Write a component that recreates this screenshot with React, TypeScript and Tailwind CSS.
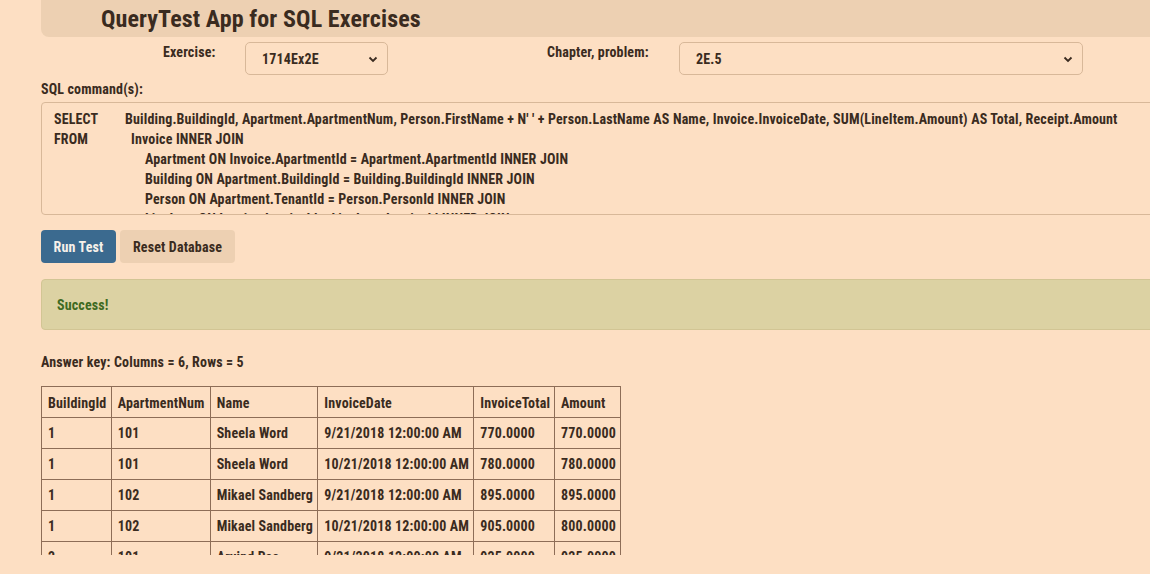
const sqlLines: { kw: string; text: string; indent: string }[] = [
  {
    kw: 'SELECT',
    text: "Building.BuildingId, Apartment.ApartmentNum, Person.FirstName + N' ' + Person.LastName AS Name, Invoice.InvoiceDate, SUM(LineItem.Amount) AS Total, Receipt.Amount",
    indent: 'pl-0',
  },
  { kw: 'FROM', text: 'Invoice INNER JOIN', indent: 'pl-[6px]' },
  { kw: '', text: 'Apartment ON Invoice.ApartmentId = Apartment.ApartmentId INNER JOIN', indent: 'pl-[20px]' },
  { kw: '', text: 'Building ON Apartment.BuildingId = Building.BuildingId INNER JOIN', indent: 'pl-[20px]' },
  { kw: '', text: 'Person ON Apartment.TenantId = Person.PersonId INNER JOIN', indent: 'pl-[20px]' },
  { kw: '', text: 'LineItem ON Invoice.InvoiceId = LineItem.InvoiceId INNER JOIN', indent: 'pl-[20px]' },
  { kw: '', text: 'Receipt ON Invoice.InvoiceId = Receipt.InvoiceId', indent: 'pl-[20px]' },
];

const columns = ['BuildingId', 'ApartmentNum', 'Name', 'InvoiceDate', 'InvoiceTotal', 'Amount'];
const colWidths = ['w-[70px]', 'w-[100px]', 'w-[108px]', 'w-[156px]', 'w-[79px]', 'w-[66px]'];

const rows = [
  ['1', '101', 'Sheela Word', '9/21/2018 12:00:00 AM', '770.0000', '770.0000'],
  ['1', '101', 'Sheela Word', '10/21/2018 12:00:00 AM', '780.0000', '780.0000'],
  ['1', '102', 'Mikael Sandberg', '9/21/2018 12:00:00 AM', '895.0000', '895.0000'],
  ['1', '102', 'Mikael Sandberg', '10/21/2018 12:00:00 AM', '905.0000', '800.0000'],
  ['2', '101', 'Arvind Rao', '9/21/2018 12:00:00 AM', '925.0000', '925.0000'],
];

const Chevron = () => (
  <svg width="10" height="10" viewBox="0 0 10 10" className="text-[#3a2b20]">
    <path d="M1.5 3.5 L5 7 L8.5 3.5" fill="none" stroke="currentColor" strokeWidth="1.8" />
  </svg>
);

export default function App() {
  return (
    <div className="w-full h-[574px] overflow-hidden bg-[#fddfc3] text-[#3a2b20] font-bold font-['Roboto_Condensed','Liberation_Sans',sans-serif] text-[14px] tracking-[0.15px]">
      <div className="w-[1250px] pl-[41px]">
        <header className="h-[37px] bg-[#edd0b2] rounded-bl-[8px] pl-[60px] flex items-center">
          <h1 className="text-[24px] leading-none tracking-[0.1px]">QueryTest App for SQL Exercises</h1>
        </header>

        <div className="flex items-start mt-[5px]">
          <div className="w-[122px]" />
          <label className="w-[82px]">Exercise:</label>
          <div className="w-[143px] h-[33px] border border-[#d8b899] rounded-[5px] flex items-center justify-between pl-[16px] pr-[9px]">
            <span className="mt-[2px]">1714Ex2E</span>
            <Chevron />
          </div>
          <div className="w-[159px]" />
          <label className="w-[132px]">Chapter, problem:</label>
          <div className="w-[404px] h-[33px] border border-[#d8b899] rounded-[5px] flex items-center justify-between pl-[16px] pr-[9px]">
            <span className="mt-[2px]">2E.5</span>
            <Chevron />
          </div>
        </div>

        <div className="mt-[4px] h-[23px]">SQL command(s):</div>

        <div className="h-[113px] w-[1200px] border border-[#d8b899] rounded-[4px] overflow-hidden pt-[6px] pl-[12px] leading-[20px]">
          {sqlLines.map((l, i) => (
            <div key={i} className="flex whitespace-nowrap">
              <span className="w-[71px] shrink-0">{l.kw}</span>
              <span className={l.indent}>{l.text}</span>
            </div>
          ))}
        </div>

        <div className="flex gap-[4px] mt-[15px]">
          <button className="w-[75px] h-[33px] pt-[2px] rounded-[4px] bg-[#3b6a8f] text-[#f7f1ea]">Run Test</button>
          <button className="w-[115px] h-[33px] pt-[2px] rounded-[4px] bg-[#edd0b2]">Reset Database</button>
        </div>

        <div className="mt-[16px] h-[51px] w-[1200px] bg-[#dcd2a3] border border-[#d2c594] rounded-[4px] flex items-center pl-[15px] pt-[1px] text-[#3f6a22]">
          Success!
        </div>

        <div className="mt-[22px] h-[34px]">Answer key: Columns = 6, Rows = 5</div>

        <div className="h-[169px] w-[580px] overflow-hidden">
          <table className="border-collapse">
            <thead>
              <tr>
                {columns.map((c, i) => (
                  <th key={c} className={`${colWidths[i]} h-[31px] border border-[#8d6d57] text-left pl-[6px] pr-[4px] pt-[2px] font-bold whitespace-nowrap`}>
                    {c}
                  </th>
                ))}
              </tr>
            </thead>
            <tbody>
              {rows.map((r, ri) => (
                <tr key={ri}>
                  {r.map((v, ci) => (
                    <td key={ci} className="h-[31px] border border-[#8d6d57] pl-[6px] pr-[4px] pt-[1px] whitespace-nowrap">
                      {v}
                    </td>
                  ))}
                </tr>
              ))}
            </tbody>
          </table>
        </div>
      </div>
    </div>
  );
}
